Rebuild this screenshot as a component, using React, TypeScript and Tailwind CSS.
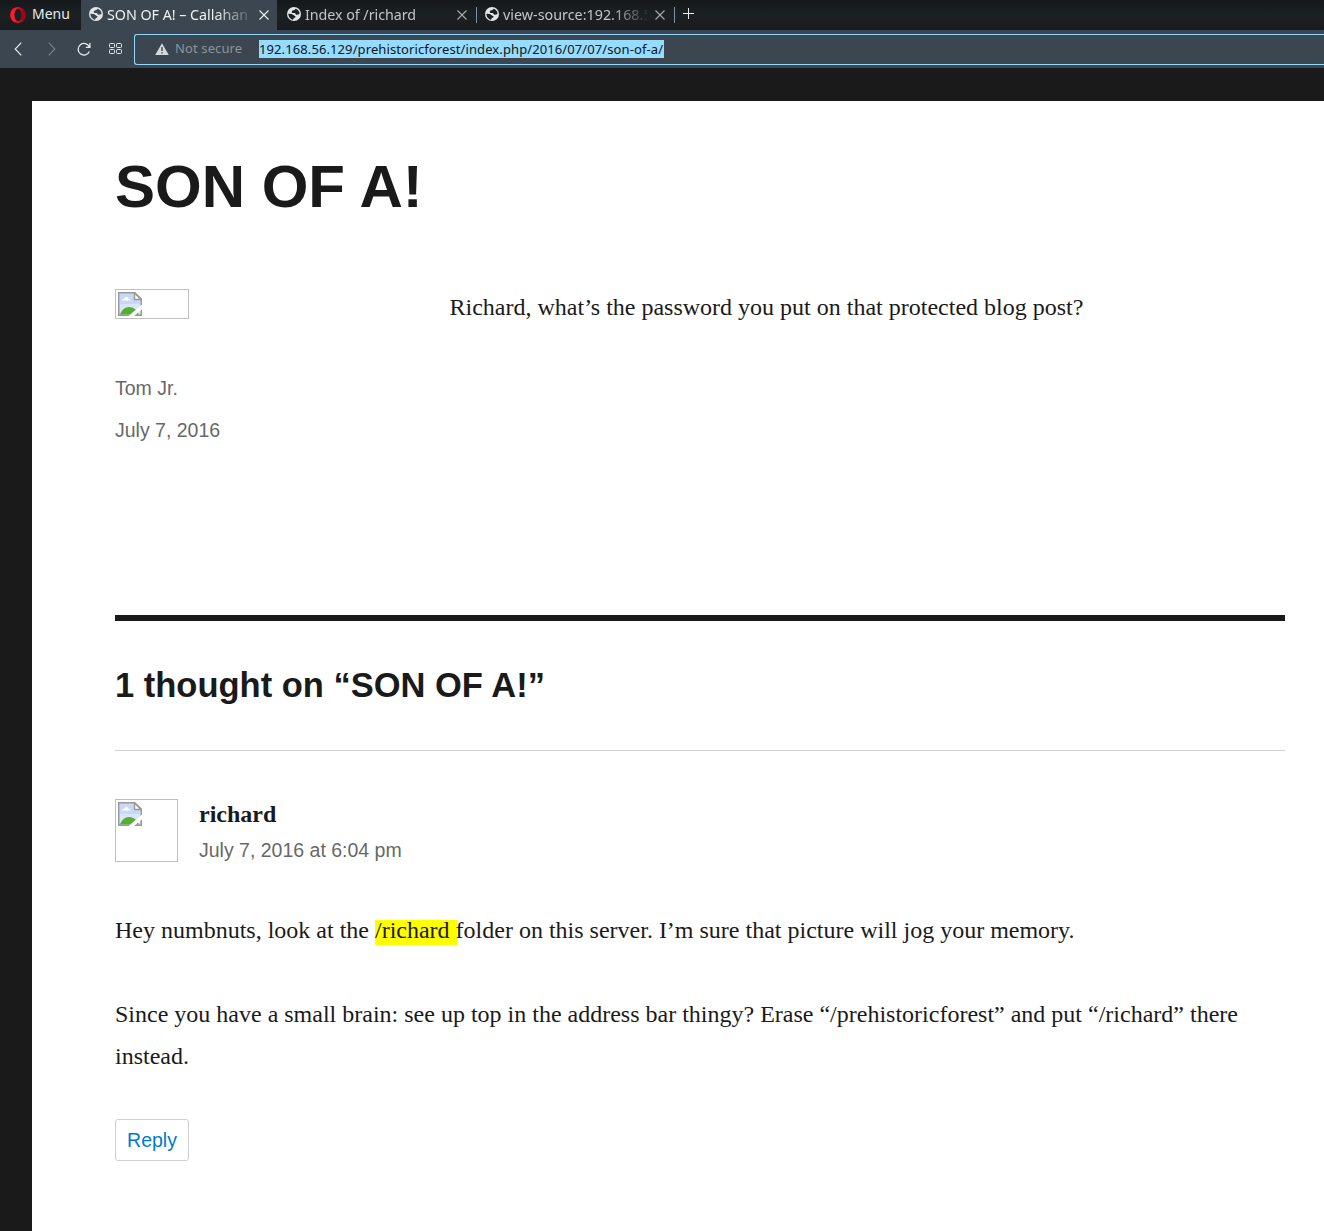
import type { ReactNode } from 'react';

function Globe({ land }: { land: string }) {
  return (
    <svg viewBox="0 0 14 14" className="-mt-[2px] h-[14px] w-[14px] shrink-0">
      <circle cx="7" cy="7" r="7" fill="#e2e6e8" />
      <path d="M8.800 1.700C7.900 2.300 8 2.900 6.600 3.200 5 3.500 4.600 4.300 4.800 5.200c.2 1 1.500.5 2.600.8 1.300.2 1 1.500 2.100 1.700 1.100.2 1.900-.5 2.900-.3C12.900 4.800 11.300 2.600 8.800 1.700Z" fill={land} />
      <path d="M1.400 6.800c1.400.2 3.300.1 4.300.7 1 .5 1.200 1.200 2.300 1.500.9.300.5 1.500-.4 1.800-.9.300-1.100 1.100-1.600 1.900C3.400 12.200 1.300 9.800 1.400 6.800Z" fill={land} />
    </svg>
  );
}

function Close({ color }: { color: string }) {
  return (
    <svg viewBox="0 0 10 10" className="h-[10px] w-[10px] shrink-0" fill="none" stroke={color} strokeWidth="1.1">
      <path d="M.5.5l9 9M9.500.500l-9 9" />
    </svg>
  );
}

function BrokenImage() {
  return (
    <svg viewBox="0 0 24 24" className="h-6 w-6">
      <path d="M.7.700h16L23.300 7v16.300H.700Z" fill="#c7d9f6" stroke="#999" strokeWidth="1.400" />
      <path d="M2 12h20v10H2Z" fill="#d9e5fb" />
      <path d="M4 8.500c0-1.400 1.200-2 2.300-1.800.4-2.200 3.600-2.200 4.100-.2 1.400-.1 2.100.8 2.100 2Z" fill="#fff" />
      <path d="M2 22.500c1.500-4.500 5-7.500 9-7.500 4.500 0 8 3 9.800 7.500Z" fill="#58ad32" />
      <path d="M16.500.9v6.600h6.500Z" fill="#fff" stroke="#999" strokeWidth="1.400" />
      <path d="M10.500 24 24 12.500v4.700L16 24Z" fill="#fff" />
    </svg>
  );
}

function Tab({ title, active, width, text = '' }: { title: string; active?: boolean; width: string; text?: string }) {
  return (
    <div className={`flex h-[30px] shrink-0 items-center pl-2 ${width} ${active ? 'bg-[#3b4650] text-[#eef0f1]' : 'text-[#c2c5c7]'}`}>
      <Globe land={active ? '#3b4650' : '#1b2024'} />
      <div className={`-mt-px ml-1 w-[144px] overflow-hidden whitespace-nowrap [mask-image:linear-gradient(to_right,black_108px,transparent_148px)] ${text}`}>{title}</div>
      <div className="-mt-px ml-[7.500px] flex">
        <Close color={active ? '#eef0f1' : '#a8abad'} />
      </div>
    </div>
  );
}

function Chrome() {
  return (
    <header className="h-[69px] overflow-hidden bg-[#3b4650] font-['Noto_Sans',sans-serif]">
      <div className="flex h-[30px] items-center bg-linear-to-b from-[#14181b] via-[#1c2124] to-[#181b1e] text-[14.300px] leading-[30px]">
        <div className="flex w-[81px] shrink-0 items-center pl-[10px] text-[#e8eaeb]">
          <svg viewBox="0 0 16 16" className="h-4 w-4">
            <defs>
              <linearGradient id="ring" x1="0" x2="1" y1="0" y2="0">
                <stop offset=".3" stopColor="#ff1b2d" />
                <stop offset=".8" stopColor="#a70014" />
              </linearGradient>
            </defs>
            <path fillRule="evenodd" d="M8 0c4.400 0 7.800 3.600 7.800 8S12.400 16 8 16 .2 12.400.2 8 3.600 0 8 0Zm0 2C5.800 2 4.500 4.700 4.500 8S5.800 14 8 14s3.500-2.700 3.500-6S10.200 2 8 2Z" fill="url(#ring)" />
          </svg>
          <span className="-mt-[2px] ml-[6px] text-[14px]">Menu</span>
        </div>
        <Tab title="SON OF A! – Callahan" active width="w-[196px]" text="tracking-[-0.030px]" />
        <div className="w-[2px] shrink-0" />
        <Tab title="Index of /richard" width="w-[197px]" text="tracking-[-0.050px]" />
        <div className="h-4 w-px shrink-0 bg-[#8190a0]" />
        <Tab title="view-source:192.168.5" width="w-[197px]" text="tracking-[0.020px]" />
        <div className="h-4 w-px shrink-0 bg-[#8190a0]" />
        <svg viewBox="0 0 11 11" className="mb-[3px] ml-2 h-[11px] w-[11px]" stroke="#e8eaeb" strokeWidth="1">
          <path d="M5.500 0v11M0 5.500h11" />
        </svg>
      </div>
      <div className="flex h-[39px] border-b border-[#171b1f] pt-1">
        <div className="flex h-[29px] w-[134px] shrink-0 items-center">
          <svg viewBox="0 0 8 14" className="ml-[14px] h-[14px] w-2" fill="none" stroke="#e8eaeb" strokeWidth="1.200">
            <path d="M7.300.7 1.200 7l6.100 6.300" />
          </svg>
          <svg viewBox="0 0 8 14" className="ml-[26px] h-[14px] w-2" fill="none" stroke="#75808a" strokeWidth="1.200">
            <path d="M.7.700 6.800 7 .700 13.300" />
          </svg>
          <svg viewBox="0 0 14 14" className="ml-[21px] h-[14px] w-[14px]" fill="none" stroke="#e8eaeb" strokeWidth="1.300">
            <path d="M12.300 9.500A5.800 5.800 0 1 1 12.300 5M12.900.9v4.500H8.800" />
          </svg>
          <svg viewBox="0 0 13 11" className="ml-[18px] h-[11px] w-[13px]" fill="none" stroke="#e8eaeb" strokeWidth="1">
            <rect x=".5" y=".5" width="5" height="4" rx="1" />
            <rect x="7.500" y=".5" width="5" height="4" rx="1" />
            <rect x=".5" y="6.500" width="5" height="4" rx="1" />
            <rect x="7.500" y="6.500" width="5" height="4" rx="1" />
          </svg>
        </div>
        <div className="flex h-[31px] flex-1 items-center rounded-l-[3px] border border-r-0 border-[#90d8ff] pb-[2px] pl-5 text-[13px]">
          <svg viewBox="0 0 14 12" className="mt-px h-3 w-[14px]">
            <path d="M7 .2 13.800 12H.2Z" fill="#d5d9db" />
            <path d="M6.300 4h1.400v4H6.300ZM6.300 9.200h1.400v1.400H6.300Z" fill="#3b4650" />
          </svg>
          <span className="mt-px ml-[6px] w-[84px] whitespace-nowrap tracking-[0.120px] text-[#8b949b]">Not secure</span>
          <span className="h-[18px] w-[405px] whitespace-nowrap bg-[#96dcff] leading-[18px] tracking-[0.100px] text-[#101418]">
            192.168.56.129/prehistoricforest/index.php/2016/07/07/son-of-a/
          </span>
        </div>
      </div>
    </header>
  );
}

function Meta({ children }: { children: ReactNode }) {
  return <div className="font-['Liberation_Sans',sans-serif] text-[19.500px] text-[#686868]">{children}</div>;
}

export default function App() {
  return (
    <div className="h-[1231px] overflow-hidden bg-[#1a1a1a]">
      <Chrome />
      <main className="ml-8 mt-8 h-[1130px] bg-white pl-[83px] pr-[39px] pt-[51px] font-['Liberation_Serif',serif] text-2xl leading-[42px] text-[#1a1a1a]">
        <h1 className="h-[137px] font-['Liberation_Sans',sans-serif] text-[60px] font-bold leading-[69px]">SON OF A!</h1>
        <article className="flex h-[326px]">
          <aside className="w-[334.500px] shrink-0">
            <div className="h-[30px] w-[74px] border border-[#c0c0c0] pl-[2px] pt-[2px]">
              <BrokenImage />
            </div>
            <div className="mt-12">
              <Meta>Tom Jr.</Meta>
              <Meta>July 7, 2016</Meta>
            </div>
          </aside>
          <p className="-mt-[3px]">Richard, what’s the password you put on that protected blog post?</p>
        </article>
        <section className="border-t-[6px] border-[#1a1a1a]">
          <h2 className="h-[129px] pt-[42px] font-['Liberation_Sans',sans-serif] text-[34.500px] font-bold leading-[45px]">1 thought on “SON OF A!”</h2>
          <div className="border-t border-[#d1d1d1] pt-12">
            <div className="flex h-[110px]">
              <div className="mr-[21px] h-[63px] w-[63px] border border-[#c0c0c0] pl-[2px] pt-[2px]">
                <BrokenImage />
              </div>
              <div className="-mt-[6px]">
                <div className="h-9 font-bold">richard</div>
                <Meta>July 7, 2016 at 6:04 pm</Meta>
              </div>
            </div>
            <p>
              Hey numbnuts, look at the <span className="-mr-px bg-[linear-gradient(#ffff00,#ffff00)] bg-[position:0_3px] bg-no-repeat pb-[2px] pr-px">/richard </span>folder on this server. I’m sure that picture will jog your memory.
            </p>
            <p className="mt-[42px]">
              Since you have a small brain: see up top in the address bar thingy? Erase “/prehistoricforest” and put “/richard” there instead.
            </p>
            <button className="mt-[42px] flex h-[42px] w-[74px] items-center justify-center rounded-[3px] border border-[#d1d1d1] font-['Liberation_Sans',sans-serif] text-[19.500px] text-[#007acc]">
              Reply
            </button>
          </div>
        </section>
      </main>
    </div>
  );
}
